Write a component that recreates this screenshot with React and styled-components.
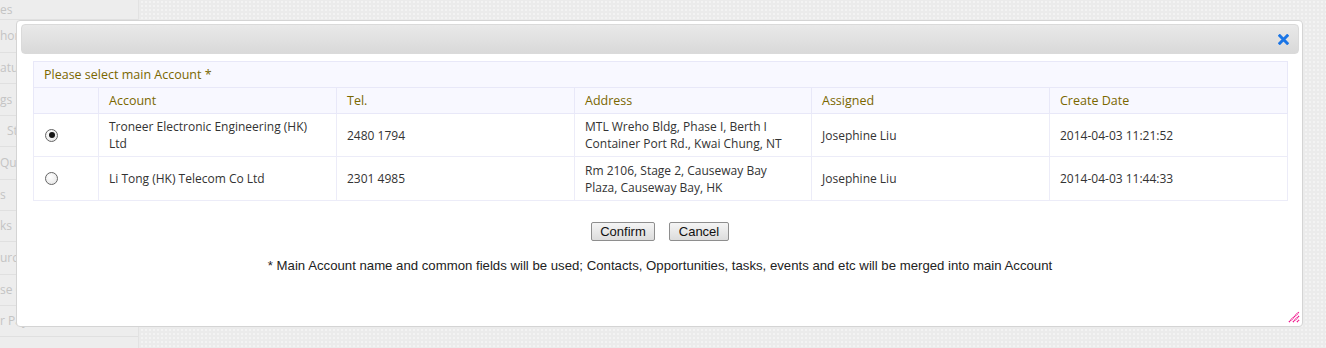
import React from "react";
import styled, { createGlobalStyle } from "styled-components";

const Global = createGlobalStyle`
  html, body { margin: 0; padding: 0; }
  body { background: #ebebeb; font-family: "Open Sans", "Noto Sans", sans-serif; }
`;

const Page = styled.div`
  position: relative;
  display: flex;
  width: 1326px;
  height: 348px;
  overflow: hidden;
  background-color: #ebebeb;
  background-image: radial-gradient(circle, #f3f3f3 0.8px, transparent 1px);
  background-size: 4px 4px;
`;

const Sidebar = styled.ul`
  list-style: none;
  margin: 0;
  padding: 0;
  width: 138px;
  flex: none;
  background: #ededed;
  border-right: 1px solid #e2e2e2;
`;

const SideItem = styled.li`
  height: ${(p) => p.$h || 31}px;
  line-height: ${(p) => p.$h || 31}px;
  border-bottom: 1px solid #e0e0e0;
  color: #c4c4c4;
  font-size: 12px;
  white-space: pre;
  overflow: hidden;
  padding-left: ${(p) => p.$indent || 0}px;
`;

const Dialog = styled.div`
  position: absolute;
  left: 16px;
  top: 20px;
  width: 1287px;
  height: 307px;
  box-sizing: border-box;
  background: #fff;
  border: 1px solid #d4d4d4;
  border-radius: 4px;
  padding: 3px 3px 3px 4px;
  display: flex;
  flex-direction: column;
`;

const TitleBar = styled.div`
  flex: none;
  height: 30px;
  box-sizing: border-box;
  border: 1px solid #dadada;
  border-radius: 4px;
  background: linear-gradient(#e9e9e9, #d9d9d9);
  display: flex;
  align-items: center;
  justify-content: flex-end;
  padding-right: 9px;
`;

const CloseBtn = styled.button`
  border: none;
  background: none;
  padding: 0;
  width: 11px;
  height: 11px;
  display: flex;
  cursor: pointer;
`;

const Body = styled.div`
  padding: 7px 12px 0 12px;
  flex: 1;
  display: flex;
  flex-direction: column;
  position: relative;
`;

const Table = styled.table`
  width: 1254px;
  border-collapse: collapse;
  table-layout: fixed;
  font-size: 12px;
  color: #333;
`;

const Th = styled.th`
  text-align: left;
  font-weight: normal;
  color: #7a6700;
  background: #f8f8ff;
  border: 1px solid #e8e8f8;
  height: 26px;
  box-sizing: border-box;
  padding: 0 10px;
  font-size: 12.5px;
  line-height: 16px;
`;

const Td = styled.td`
  border: 1px solid #ececf8;
  height: ${(p) => p.$h}px;
  box-sizing: border-box;
  padding: 0 10px;
  line-height: 17px;
  vertical-align: middle;
`;

const RadioTd = styled(Td)`
  padding-left: 11px;
`;

const Radio = styled.span`
  display: block;
  width: 11px;
  height: 11px;
  border-radius: 50%;
  border: 1px solid #666;
  background: radial-gradient(circle at 40% 35%, #ffffff, #e2e2e2);
  position: relative;
  &::after {
    content: "";
    display: ${(p) => (p.$checked ? "block" : "none")};
    position: absolute;
    left: 2.5px;
    top: 2.5px;
    width: 6px;
    height: 6px;
    border-radius: 50%;
    background: #151515;
  }
`;

const Actions = styled.div`
  display: flex;
  justify-content: center;
  gap: 14px;
  margin-top: 21px;
`;

const Button = styled.button`
  font-family: "Liberation Sans", Arial, sans-serif;
  font-size: 13px;
  color: #111;
  height: 19px;
  width: ${(p) => p.$w}px;
  padding: 0;
  border: 1px solid #8e8e8e;
  border-radius: 2px;
  background: linear-gradient(#f5f5f5, #dcdcdc);
  cursor: pointer;
`;

const Note = styled.p`
  margin: 17px 0 0 0;
  text-align: center;
  font-family: "Liberation Sans", Arial, sans-serif;
  font-size: 13.2px;
  color: #222;
`;

const Grip = styled.svg`
  position: absolute;
  right: -1px;
  bottom: 0;
`;

const rows = [
  {
    checked: true,
    account: "Troneer Electronic Engineering (HK) Ltd",
    tel: "2480 1794",
    address: "MTL Wreho Bldg, Phase I, Berth I Container Port Rd., Kwai Chung, NT",
    assigned: "Josephine Liu",
    date: "2014-04-03 11:21:52",
    h: 43,
  },
  {
    checked: false,
    account: "Li Tong (HK) Telecom Co Ltd",
    tel: "2301 4985",
    address: "Rm 2106, Stage 2, Causeway Bay Plaza, Causeway Bay, HK",
    assigned: "Josephine Liu",
    date: "2014-04-03 11:44:33",
    h: 44,
  },
];

const side = [
  ["es", 19, 0],
  ["hority", 32, 0],
  ["atus", 30, 0],
  ["gs", 31, 0],
  ["Status", 30, 7],
  ["Quotation", 32, 0],
  ["s", 30, 0],
  ["ks", 30, 0],
  ["urchase", 32, 0],
  ["se Order", 30, 0],
  ["r Payment", 30, 0],
  ["", 30, 0],
];

export default function App() {
  return (
    <>
      <Global />
      <Page>
        <Sidebar>
          {side.map(([t, h, ind], i) => (
            <SideItem key={i} $h={h} $indent={ind}>
              {t}
            </SideItem>
          ))}
        </Sidebar>
        <Dialog>
          <TitleBar>
            <CloseBtn aria-label="close">
              <svg width="11" height="11" viewBox="0 0 11 11">
                <path
                  d="M1.8 1.8 L9.2 9.2 M9.2 1.8 L1.8 9.2"
                  stroke="#1a75e6"
                  strokeWidth="3"
                  strokeLinecap="square"
                />
              </svg>
            </CloseBtn>
          </TitleBar>
          <Body>
            <Table>
              <colgroup>
                <col style={{ width: 65 }} />
                <col style={{ width: 238 }} />
                <col style={{ width: 238 }} />
                <col style={{ width: 237 }} />
                <col style={{ width: 238 }} />
                <col style={{ width: 238 }} />
              </colgroup>
              <thead>
                <tr>
                  <Th colSpan={6}>Please select main Account *</Th>
                </tr>
                <tr>
                  <Th />
                  <Th>Account</Th>
                  <Th>Tel.</Th>
                  <Th>Address</Th>
                  <Th>Assigned</Th>
                  <Th>Create Date</Th>
                </tr>
              </thead>
              <tbody>
                {rows.map((r, i) => (
                  <tr key={i}>
                    <RadioTd $h={r.h}>
                      <Radio $checked={r.checked} />
                    </RadioTd>
                    <Td $h={r.h}>{r.account}</Td>
                    <Td $h={r.h}>{r.tel}</Td>
                    <Td $h={r.h}>{r.address}</Td>
                    <Td $h={r.h}>{r.assigned}</Td>
                    <Td $h={r.h}>{r.date}</Td>
                  </tr>
                ))}
              </tbody>
            </Table>
            <Actions>
              <Button $w={64}>Confirm</Button>
              <Button $w={60}>Cancel</Button>
            </Actions>
            <Note>
              * Main Account name and common fields will be used; Contacts, Opportunities, tasks, events and etc will be merged into main Account
            </Note>
            <Grip width="12" height="12" viewBox="0 0 12 12">
              <path
                d="M1 11 L11 1 M5 11 L11 5 M9 11 L11 9"
                stroke="#f0148c"
                strokeWidth="1.5"
                strokeDasharray="1.2 0.6"
              />
            </Grip>
          </Body>
        </Dialog>
      </Page>
    </>
  );
}
